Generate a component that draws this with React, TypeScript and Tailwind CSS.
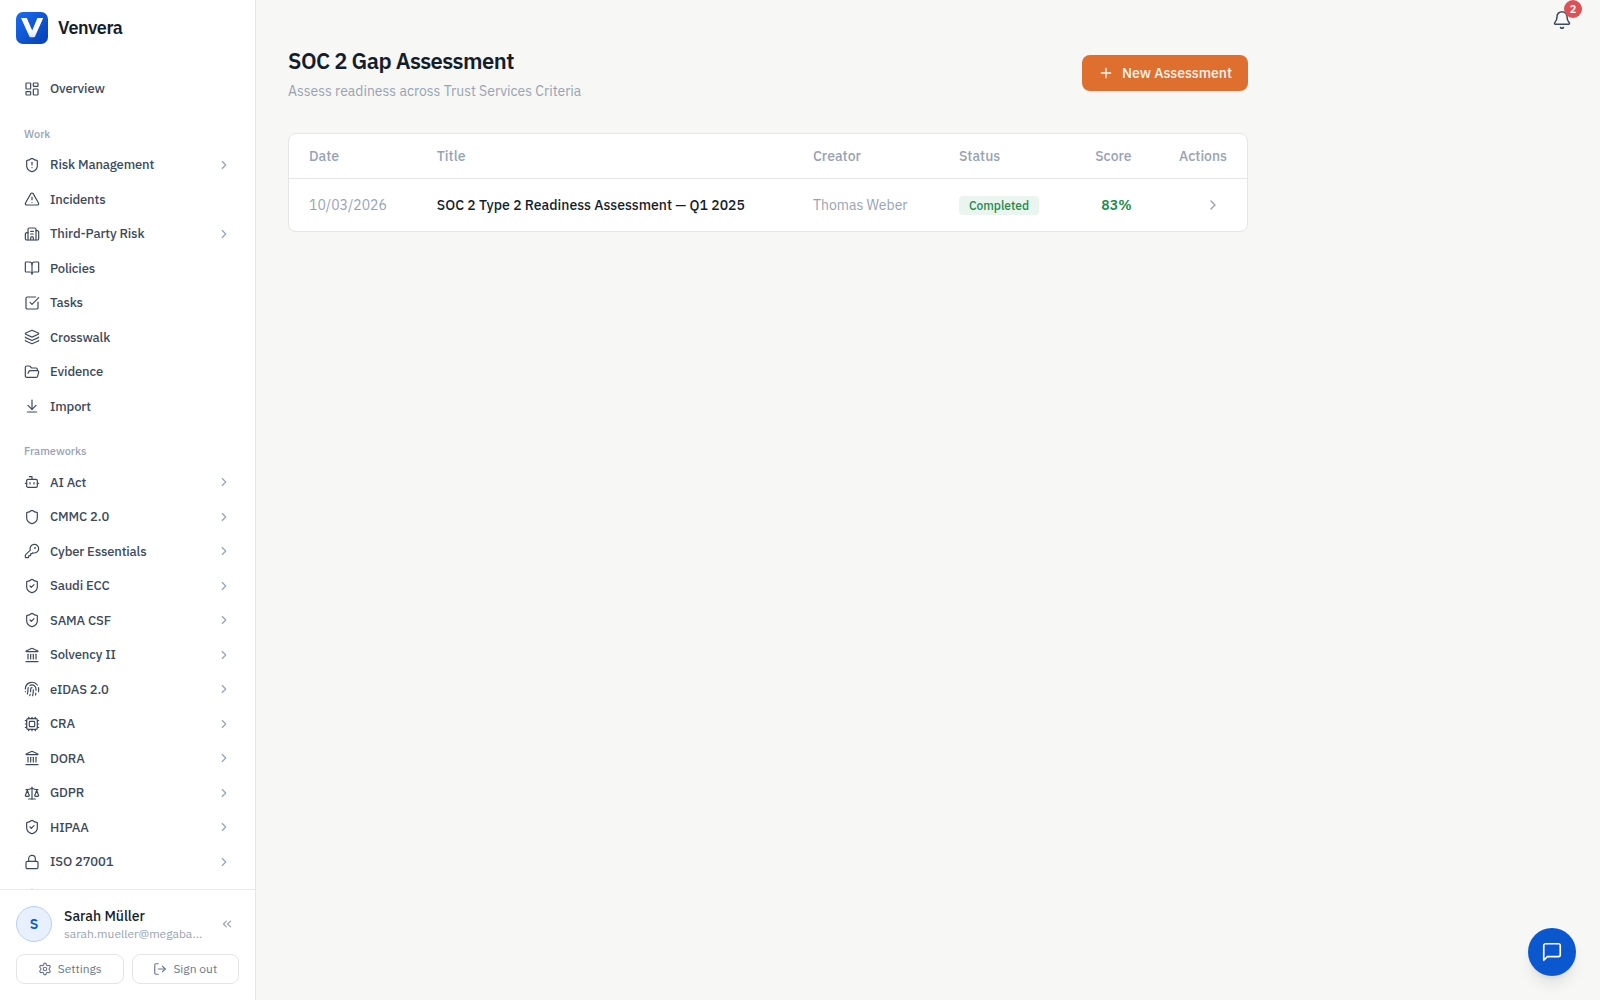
import {
    ArrowDownToLine, Bell, BookOpen, Bot, Building2, ChevronRight, ChevronsLeft, Cpu, Fingerprint, FolderOpen,
    KeyRound, Landmark, Layers, LayoutDashboard, Lock, LogOut, LucideIcon, Plus, Scale, Settings, Shield,
    ShieldAlert, ShieldCheck, SquareCheckBig, TriangleAlert
} from "lucide-react";

type NavEntry = {
    label: string
    icon: LucideIcon
    expandable?: boolean
}

const workItems: NavEntry[] = [
    {label: "Risk Management", icon: ShieldAlert, expandable: true},
    {label: "Incidents", icon: TriangleAlert},
    {label: "Third-Party Risk", icon: Building2, expandable: true},
    {label: "Policies", icon: BookOpen},
    {label: "Tasks", icon: SquareCheckBig},
    {label: "Crosswalk", icon: Layers},
    {label: "Evidence", icon: FolderOpen},
    {label: "Import", icon: ArrowDownToLine},
]

const frameworkItems: NavEntry[] = [
    {label: "AI Act", icon: Bot, expandable: true},
    {label: "CMMC 2.0", icon: Shield, expandable: true},
    {label: "Cyber Essentials", icon: KeyRound, expandable: true},
    {label: "Saudi ECC", icon: ShieldCheck, expandable: true},
    {label: "SAMA CSF", icon: ShieldCheck, expandable: true},
    {label: "Solvency II", icon: Landmark, expandable: true},
    {label: "eIDAS 2.0", icon: Fingerprint, expandable: true},
    {label: "CRA", icon: Cpu, expandable: true},
    {label: "DORA", icon: Landmark, expandable: true},
    {label: "GDPR", icon: Scale, expandable: true},
    {label: "HIPAA", icon: ShieldCheck, expandable: true},
    {label: "ISO 27001", icon: Lock, expandable: true},
    // todo: more frameworks, only the top of this row is visible
    {label: "", icon: Shield},
]

const assessments = [
    {
        date: "10/03/2026",
        title: "SOC 2 Type 2 Readiness Assessment — Q1 2025",
        creator: "Thomas Weber",
        status: "Completed",
        score: 83,
    },
]

export default function App() {
    return (
        <div className="flex h-screen overflow-hidden bg-[#f7f7f5] font-['IBM_Plex_Sans',Roboto,sans-serif] text-[#141d2b]">
            <Sidebar />
            <main className="relative flex-1 px-8 pt-[45px]">
                <GapAssessments />
                <NotificationBell />
                <ChatButton />
            </main>
        </div>
    )
}

function Sidebar() {
    return (
        <aside className="flex w-64 shrink-0 flex-col border-r border-[#e6e6e4] bg-white">
            <div className="flex h-14 shrink-0 items-center gap-2.5 px-4">
                <Logo />
                <span className="pb-0.5 text-[18px] font-semibold tracking-tight">Venvera</span>
            </div>
            <nav className="min-h-0 flex-1 overflow-hidden px-3 pt-[15.5px]">
                <NavItem label="Overview" icon={LayoutDashboard} />
                <NavSection title="Work" items={workItems} />
                <NavSection title="Frameworks" items={frameworkItems} />
            </nav>
            <UserPanel />
        </aside>
    )
}

function NavSection(props: {title: string, items: NavEntry[]}) {
    return (
        <div>
            <p className="flex h-[41.5px] items-center px-3 pt-[14px] text-[11px] font-medium text-[#97a3b4]">{props.title}</p>
            {props.items.map(item => <NavItem key={item.label} {...item} />)}
        </div>
    )
}

function NavItem({label, icon: Icon, expandable}: NavEntry) {
    return (
        <a className="flex h-[34.5px] items-center gap-2.5 px-3 text-[13px] font-medium tracking-[-0.01em] text-[#3d4a5c]">
            <Icon size={16} strokeWidth={1.8} className="shrink-0" />
            <span className="flex-1">{label}</span>
            {expandable && <ChevronRight size={14} className="text-[#97a3b4]" />}
        </a>
    )
}

function UserPanel() {
    return (
        <div className="h-[111px] shrink-0 border-t border-[#e6eaea] px-4 pt-4">
            <div className="flex items-center gap-3">
                <div className="flex size-9 shrink-0 items-center justify-center rounded-full border border-[#b9cff5] bg-[#e8f0fd] text-[14px] font-semibold text-[#0b57d0]">S</div>
                <div className="min-w-0 flex-1">
                    <p className="pt-px text-[14px] leading-[18px] font-medium">Sarah Müller</p>
                    <p className="text-[12px] leading-[17px] whitespace-nowrap text-[#97a3b4]">sarah.mueller@megaba...</p>
                </div>
                <ChevronsLeft size={14} className="mr-[5px] text-[#97a3b4]" />
            </div>
            <div className="mt-3 grid grid-cols-2 gap-2">
                <PanelButton label="Settings" icon={Settings} />
                <PanelButton label="Sign out" icon={LogOut} />
            </div>
        </div>
    )
}

function PanelButton({label, icon: Icon}: {label: string, icon: LucideIcon}) {
    return (
        <button className="flex h-[30px] items-center justify-center gap-1.5 rounded-lg border border-[#e4e5e4] text-[12px] text-[#6b788a]">
            <Icon size={14} />
            {label}
        </button>
    )
}

function GapAssessments() {
    return (
        <div className="w-[960px]">
            <div className="flex items-start justify-between">
                <div>
                    <h1 className="text-[22px] leading-[31px] font-semibold tracking-tight">SOC 2 Gap Assessment</h1>
                    <p className="mt-[5px] text-[14px] leading-[21px] text-[#97a3b4]">Assess readiness across Trust Services Criteria</p>
                </div>
                <button className="mt-2.5 flex h-9 items-center gap-2 rounded-lg bg-[#de6f2f] px-4 text-[14px] font-medium text-[#fdf6ef]">
                    <Plus size={16} />
                    New Assessment
                </button>
            </div>
            <div className="mt-[31px] rounded-lg border border-[#e5e6e5] bg-white text-[14px]">
                <table className="w-full table-fixed text-left">
                    <colgroup>
                        <col className="w-[127.8px]" />
                        <col className="w-[376.2px]" />
                        <col className="w-[146px]" />
                        <col className="w-[114.6px]" />
                        <col className="w-[98px]" />
                        <col />
                    </colgroup>
                    <thead>
                        <tr className="h-[44.5px] border-b border-[#e5e6e5] text-[#97a3b4]">
                            <th className="pl-5 font-medium">Date</th>
                            <th className="pl-5 font-medium">Title</th>
                            <th className="pl-5 font-medium">Creator</th>
                            <th className="pl-5 font-medium">Status</th>
                            <th className="pr-5 text-right font-medium">Score</th>
                            <th className="pr-5 text-right font-medium">Actions</th>
                        </tr>
                    </thead>
                    <tbody>
                        {assessments.map(assessment =>
                            <tr key={assessment.title} className="h-[52.5px] text-[#97a3b4]">
                                <td className="pl-5">{assessment.date}</td>
                                <td className="pl-5 font-medium text-[#141d2b]">{assessment.title}</td>
                                <td className="pl-5">{assessment.creator}</td>
                                <td className="pl-5"><StatusBadge label={assessment.status} /></td>
                                <td className="pr-5 text-right font-semibold text-[#1f8a50]">{assessment.score}%</td>
                                <td className="pr-[26px]"><ChevronRight size={16} className="ml-auto" /></td>
                            </tr>
                        )}
                    </tbody>
                </table>
            </div>
        </div>
    )
}

function StatusBadge(props: {label: string}) {
    return (
        <span className="flex h-[19px] w-20 items-center justify-center rounded bg-[#eaf5ef] pt-px text-[12px] font-medium text-[#1f8a50]">{props.label}</span>
    )
}

function NotificationBell() {
    return (
        <div className="absolute top-2.5 right-7">
            <Bell size={20} strokeWidth={1.8} className="text-[#3d4a5c]" />
            <span className="absolute top-[-10px] right-[-10px] flex size-[18px] items-center justify-center rounded-full bg-[#dd5055] text-[11px] font-semibold text-white">2</span>
        </div>
    )
}

function ChatButton() {
    return (
        <button className="absolute right-6 bottom-6 flex size-12 items-center justify-center rounded-full bg-[#0b57d0] text-white shadow-lg">
            <svg width="22" height="22" viewBox="0 0 24 24" fill="none" stroke="currentColor" strokeWidth="1.8" strokeLinecap="round" strokeLinejoin="round">
                <path d="M21 15a2 2 0 0 1-2 2H7l-4 4V5a2 2 0 0 1 2-2h14a2 2 0 0 1 2 2z" />
            </svg>
        </button>
    )
}

function Logo() {
    return (
        <svg width="32" height="32" viewBox="0 0 32 32">
            <defs>
                <linearGradient id="tile" x1="0" y1="0" x2="1" y2="1">
                    <stop offset="0" stopColor="#1a6cf0" />
                    <stop offset="1" stopColor="#0540b4" />
                </linearGradient>
                <linearGradient id="mark" x1="0" y1="0" x2="0" y2="1">
                    <stop offset="0.6" stopColor="#ffffff" />
                    <stop offset="1" stopColor="#dbe5f8" />
                </linearGradient>
            </defs>
            <rect width="32" height="32" rx="7" fill="url(#tile)" />
            <path d="M5 6h5.8l5.400 12.500L21.400 6H27.200l-8.200 18.400c-.3.6-.8.9-1.400.9h-2.800c-.6 0-1.100-.3-1.400-.9z" fill="url(#mark)" />
        </svg>
    )
}
